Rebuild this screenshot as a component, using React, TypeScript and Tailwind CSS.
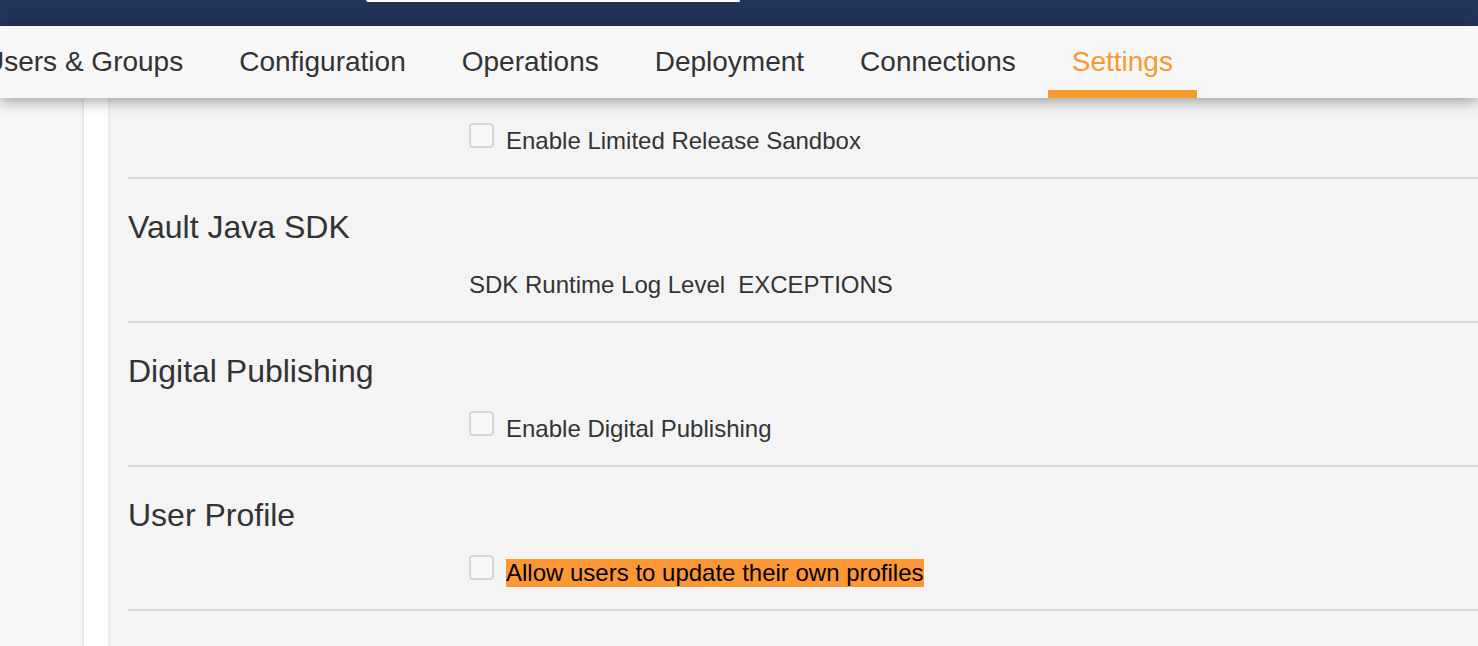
import React from "react";

const tabs = ["Users & Groups", "Configuration", "Operations", "Deployment", "Connections", "Settings"];

function Checkbox() {
  return <span className="mt-[-4px] h-[25px] w-[25px] shrink-0 rounded-[4px] border-2 border-[#d6d6d6] bg-[#f7f7f7]" />;
}

function CheckRow({ label, highlight }: { label: string; highlight?: boolean }) {
  return (
    <div className="ml-[341px] flex h-[28px] items-start gap-[12px]">
      <Checkbox />
      <span className={highlight ? "bg-[#fd9734] text-black" : ""}>{label}</span>
    </div>
  );
}

function Section({ title, children }: { title: string; children: React.ReactNode }) {
  return (
    <section className="border-b-2 border-[#d9d9d9] pt-[30px] pb-[22px]">
      <h2 className="h-[36px] text-[32px] leading-[36px]">{title}</h2>
      <div className="mt-[26px]">{children}</div>
    </section>
  );
}

export default function App() {
  return (
    <div className="flex h-[646px] w-[1478px] flex-col overflow-hidden bg-[#f4f4f4] font-['Liberation_Sans',Arial,sans-serif] text-[#333333]">
      {/* Top bar */}
      <div className="relative h-[26px] shrink-0 bg-[#22345a]">
        <div className="absolute left-[366px] top-0 h-[2px] w-[374px] rounded-bl-[3px] border-r border-[#c9cdd8] bg-white" />
      </div>

      {/* Tabs */}
      <nav className="relative z-10 flex h-[72px] shrink-0 gap-2 bg-[#f7f7f7] pl-0 shadow-[0_3px_14px_rgba(0,0,0,0.38)]">
        <div className="ml-[-40px] flex gap-2">
          {tabs.map((t) => {
            const active = t === "Settings";
            return (
              <div
                key={t}
                className={`relative flex h-full items-center whitespace-nowrap px-6 text-[28px] ${
                  active ? "text-[#f7992f]" : "text-[#333333]"
                }`}
              >
                {t}
                {active && <span className="absolute inset-x-0 bottom-0 h-2 bg-[#f7992f]" />}
              </div>
            );
          })}
        </div>
      </nav>

      {/* Body */}
      <div className="flex flex-1">
        <aside className="w-[84px] shrink-0 border-r-2 border-[#e8e8e8] bg-[#f6f6f6]" />
        <div className="w-[26px] shrink-0 border-r-2 border-[#ececec] bg-white" />
        <main className="flex-1 bg-[#f4f4f4] pl-[18px] text-[24px] leading-[28px]">
          <div className="border-b-2 border-[#d9d9d9] pt-[29px] pb-[22px]">
            <CheckRow label="Enable Limited Release Sandbox" />
          </div>
          <Section title="Vault Java SDK">
            <div className="ml-[341px] flex h-[28px] gap-[13px]">
              <span>SDK Runtime Log Level</span>
              <span>EXCEPTIONS</span>
            </div>
          </Section>
          <Section title="Digital Publishing">
            <CheckRow label="Enable Digital Publishing" />
          </Section>
          <Section title="User Profile">
            <CheckRow label="Allow users to update their own profiles" highlight />
          </Section>
        </main>
      </div>
    </div>
  );
}
